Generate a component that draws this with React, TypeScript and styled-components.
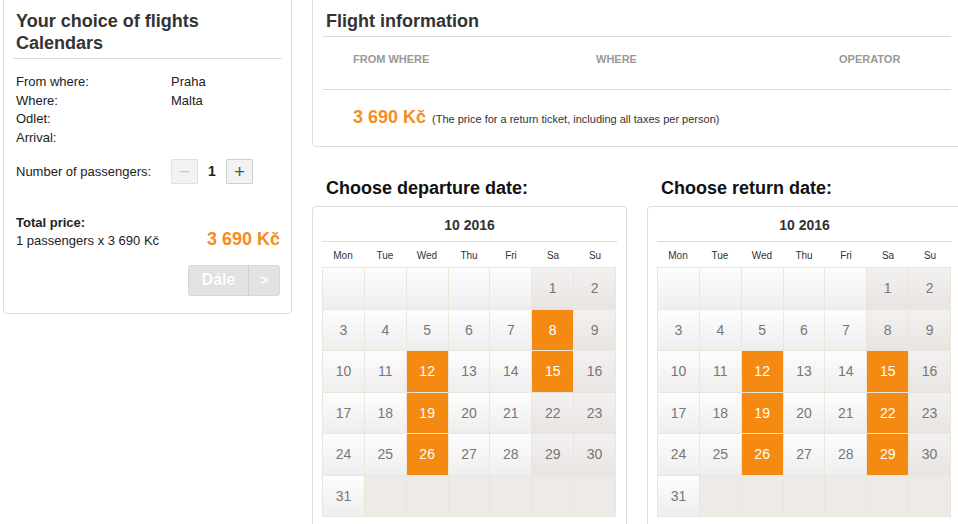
import React from "react";
import styled, { createGlobalStyle, css } from "styled-components";

const GlobalStyle = createGlobalStyle`
  html, body {
    margin: 0;
    padding: 0;
    overflow: hidden;
    background: #ffffff;
    font-family: "Liberation Sans", Arial, Helvetica, sans-serif;
    color: #333;
  }
`;

const Page = styled.div`
  display: flex;
  align-items: flex-start;
  gap: 20px;
  width: 980px;
  margin: -6px 0 0 3px;
`;

const Panel = styled.div`
  box-sizing: border-box;
  border: 1px solid #dcdcdc;
  border-radius: 4px;
  background: #fff;
`;

const LeftPanel = styled(Panel)`
  width: 289px;
  flex: none;
  padding: 15px 9px 17px;
`;

const Title = styled.h2`
  margin: 0;
  font-size: 18px;
  line-height: 22px;
  font-weight: bold;
  color: #333;
  padding: 0 3px 4px;
  border-bottom: 1px solid #dcdcdc;
`;

const InfoList = styled.div`
  margin-top: 14px;
  padding: 0 3px;
`;

const InfoRow = styled.div`
  display: flex;
  font-size: 13px;
  line-height: 18.7px;
  color: #222;
`;

const InfoLabel = styled.span`
  width: 155px;
  flex: none;
`;

const PassengerRow = styled.div`
  display: flex;
  align-items: center;
  margin-top: 11px;
  padding: 0 3px;
  font-size: 13px;
  color: #222;
`;

const StepButton = styled.button<{ $disabled?: boolean }>`
  box-sizing: border-box;
  width: 27px;
  height: 25px;
  padding: 0;
  display: flex;
  align-items: center;
  justify-content: center;
  background: #f2f2f2;
  border: 1px solid ${(p) => (p.$disabled ? "#e0e0e0" : "#cfcfcf")};
  border-radius: 1px;
  font-family: "Liberation Sans", Arial, sans-serif;
  font-size: 19px;
  line-height: 1;
  color: ${(p) => (p.$disabled ? "#c4c4c4" : "#555")};
`;

const Count = styled.span`
  width: 28px;
  text-align: center;
  font-size: 14px;
  font-weight: bold;
  color: #222;
`;

const TotalBlock = styled.div`
  margin-top: 31px;
  padding: 0 2px 0 3px;
  font-size: 13px;
  color: #222;
`;

const TotalLabel = styled.div`
  font-weight: bold;
  line-height: 16px;
`;

const TotalLine = styled.div`
  display: flex;
  justify-content: space-between;
  align-items: baseline;
  line-height: 16px;
`;

const Price = styled.span`
  color: #f68b1f;
  font-weight: bold;
  font-size: 18px;
`;

const ActionRow = styled.div`
  display: flex;
  justify-content: flex-end;
  margin-top: 16px;
  padding-right: 2px;
`;

const NextButton = styled.div`
  box-sizing: border-box;
  width: 92px;
  height: 31px;
  display: flex;
  background: #e2e2e2;
  border: 1px solid #d6d6d6;
  border-radius: 3px;
  color: #fff;
  font-weight: bold;
  text-shadow: 0 0 1px rgba(0, 0, 0, 0.08);
`;

const NextLabel = styled.span`
  flex: 1;
  display: flex;
  align-items: center;
  justify-content: center;
  font-size: 16px;
`;

const NextArrow = styled.span`
  width: 30px;
  display: flex;
  align-items: center;
  justify-content: center;
  font-size: 14px;
  border-left: 1px solid #d0d0d0;
`;

const RightColumn = styled.div`
  width: 650px;
  flex: none;
  display: flex;
  flex-direction: column;
`;

const FlightPanel = styled(Panel)`
  padding: 15px 10px 0;
`;

const FlightTitle = styled(Title)`
  padding-bottom: 4px;
`;

const HeaderRow = styled.div`
  display: grid;
  grid-template-columns: repeat(3, 243px);
  padding: 15px 0 23px 30px;
  border-bottom: 1px solid #dcdcdc;
`;

const HeaderCell = styled.div`
  font-size: 11px;
  line-height: 14px;
  font-weight: bold;
  color: #999;
  text-transform: uppercase;
`;

const PriceRow = styled.div`
  display: flex;
  align-items: baseline;
  gap: 6px;
  padding: 17px 0 17px 30px;
  line-height: 20px;
`;

const PriceNote = styled.span`
  font-size: 11px;
  color: #333;
`;

const CalendarsRow = styled.div`
  display: flex;
  gap: 20px;
  margin-top: 30px;
`;

const CalendarColumn = styled.div`
  width: 315px;
  flex: none;
`;

const SectionHeading = styled.h3`
  margin: 0 0 7px;
  padding-left: 14px;
  font-size: 18px;
  line-height: 22px;
  font-weight: bold;
  color: #111;
`;

const CalendarPanel = styled(Panel)`
  padding: 0 9px 20px;
`;

const MonthTitle = styled.div`
  padding: 8px 0 6px;
  border-bottom: 1px solid #dcdcdc;
  text-align: center;
  font-size: 14px;
  line-height: 20px;
  font-weight: bold;
  color: #333;
`;

const WeekdayRow = styled.div`
  display: grid;
  grid-template-columns: repeat(7, 1fr);
  width: 294px;
  padding: 7px 0 4px;
`;

const Weekday = styled.div`
  text-align: center;
  font-size: 10px;
  line-height: 14px;
  color: #333;
`;

const DayGrid = styled.div`
  display: grid;
  grid-template-columns: repeat(7, 1fr);
  grid-auto-rows: 40.5px;
  gap: 1px;
  padding: 1px;
  background: #ebe6d8;
  width: 294px;
  box-sizing: border-box;
`;

type CellKind = "weekday" | "weekend" | "selected" | "blank";

const kindStyles: Record<CellKind, ReturnType<typeof css>> = {
  weekday: css`
    background: linear-gradient(#fdfdfd, #eeeeee);
    color: #777;
  `,
  weekend: css`
    background: linear-gradient(#f3f1f0, #e8e4e2);
    color: #777;
  `,
  selected: css`
    background: #f58a12;
    color: #fff;
  `,
  blank: css`
    background: #eeeae8;
    color: #777;
  `,
};

const DayCell = styled.div<{ $kind: CellKind }>`
  display: flex;
  align-items: center;
  justify-content: center;
  font-size: 14px;
  ${(p) => kindStyles[p.$kind]}
`;

const WEEKDAYS = ["Mon", "Tue", "Wed", "Thu", "Fri", "Sa", "Su"];

function Calendar({ selected }: { selected: number[] }) {
  const lead = 5;
  const days = 31;
  const cells: { day: number | null; kind: CellKind }[] = [];
  for (let i = 0; i < 42; i++) {
    const col = i % 7;
    const day = i - lead + 1;
    if (i < lead) {
      cells.push({ day: null, kind: col >= 5 ? "weekend" : "weekday" });
    } else if (day > days) {
      cells.push({ day: null, kind: "blank" });
    } else if (selected.includes(day)) {
      cells.push({ day, kind: "selected" });
    } else {
      cells.push({ day, kind: col >= 5 ? "weekend" : "weekday" });
    }
  }
  return (
    <CalendarPanel>
      <MonthTitle>10 2016</MonthTitle>
      <WeekdayRow>
        {WEEKDAYS.map((w) => (
          <Weekday key={w}>{w}</Weekday>
        ))}
      </WeekdayRow>
      <DayGrid>
        {cells.map((c, i) => (
          <DayCell key={i} $kind={c.kind}>
            {c.day ?? ""}
          </DayCell>
        ))}
      </DayGrid>
    </CalendarPanel>
  );
}

export default function App() {
  return (
    <>
      <GlobalStyle />
      <Page>
        <LeftPanel>
          <Title>
            Your choice of flights
            <br />
            Calendars
          </Title>
          <InfoList>
            <InfoRow>
              <InfoLabel>From where:</InfoLabel>
              <span>Praha</span>
            </InfoRow>
            <InfoRow>
              <InfoLabel>Where:</InfoLabel>
              <span>Malta</span>
            </InfoRow>
            <InfoRow>
              <InfoLabel>Odlet:</InfoLabel>
            </InfoRow>
            <InfoRow>
              <InfoLabel>Arrival:</InfoLabel>
            </InfoRow>
          </InfoList>
          <PassengerRow>
            <InfoLabel>Number of passengers:</InfoLabel>
            <StepButton $disabled>−</StepButton>
            <Count>1</Count>
            <StepButton>+</StepButton>
          </PassengerRow>
          <TotalBlock>
            <TotalLabel>Total price:</TotalLabel>
            <TotalLine>
              <span>1 passengers x 3 690 Kč</span>
              <Price>3 690 Kč</Price>
            </TotalLine>
          </TotalBlock>
          <ActionRow>
            <NextButton>
              <NextLabel>Dále</NextLabel>
              <NextArrow>&gt;</NextArrow>
            </NextButton>
          </ActionRow>
        </LeftPanel>
        <RightColumn>
          <FlightPanel>
            <FlightTitle>Flight information</FlightTitle>
            <HeaderRow>
              <HeaderCell>From where</HeaderCell>
              <HeaderCell>Where</HeaderCell>
              <HeaderCell>Operator</HeaderCell>
            </HeaderRow>
            <PriceRow>
              <Price>3 690 Kč</Price>
              <PriceNote>
                (The price for a return ticket, including all taxes per person)
              </PriceNote>
            </PriceRow>
          </FlightPanel>
          <CalendarsRow>
            <CalendarColumn>
              <SectionHeading>Choose departure date:</SectionHeading>
              <Calendar selected={[8, 12, 15, 19, 26]} />
            </CalendarColumn>
            <CalendarColumn>
              <SectionHeading>Choose return date:</SectionHeading>
              <Calendar selected={[12, 15, 19, 22, 26, 29]} />
            </CalendarColumn>
          </CalendarsRow>
        </RightColumn>
      </Page>
    </>
  );
}
